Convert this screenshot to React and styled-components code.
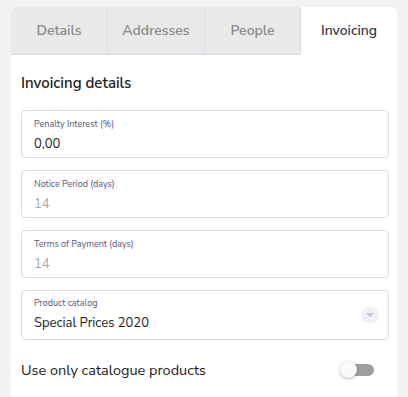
import React from 'react'
import styled, { createGlobalStyle } from 'styled-components';

const GlobalStyle = createGlobalStyle`
  html, body {
    margin: 0;
    padding: 0;
    background: #f2f2f2;
    font-family: "Nunito Sans", Lato, "Open Sans", sans-serif;
  }
`

const tabs = ['Details', 'Addresses', 'People', 'Invoicing']

const fields = [
  { label: 'Penalty Interest (%)', value: '0,00', muted: false },
  { label: 'Notice Period (days)', value: '14', muted: true },
  { label: 'Terms of Payment (days)', value: '14', muted: true },
]

export default function App() {
  return (
    <>
      <GlobalStyle />
      <Page>
        <Card>
          <TabBar>
            {tabs.map((t) => (
              <Tab key={t} $active={t === 'Invoicing'}>{t}</Tab>
            ))}
          </TabBar>
          <Body>
            <Titulo>Invoicing details</Titulo>
            {fields.map((f) => (
              <Field key={f.label}>
                <Label>{f.label}</Label>
                <Value $muted={f.muted}>{f.value}</Value>
              </Field>
            ))}
            <Field $select>
              <div>
                <Label>Product catalog</Label>
                <Value>Special Prices 2020</Value>
              </div>
              <Dropdown>
                <svg width="8" height="5" viewBox="0 0 8 5">
                  <path d="M0 0 L8 0 L4 4.5 Z" fill="#c9c9d4" />
                </svg>
              </Dropdown>
            </Field>
            <ToggleRow>
              <span>Use only catalogue products</span>
              <Switch>
                <Track />
                <Knob />
              </Switch>
            </ToggleRow>
          </Body>
        </Card>
      </Page>
    </>
  )
}

const Page = styled.div`
  padding: 7px 11px 0 11px;
  height: 397px;
  box-sizing: border-box;
`

const Card = styled.div`
  background: #fff;
  border-radius: 6px 6px 0 0;
  overflow: hidden;
  height: 100%;
`

const TabBar = styled.div`
  display: grid;
  grid-template-columns: 96px 97px 96px 1fr;
  height: 48px;
`

const Tab = styled.div`
  display: flex;
  align-items: center;
  justify-content: center;
  font-size: 14px;
  font-weight: ${(p) => (p.$active ? 500 : 600)};
  color: ${(p) => (p.$active ? '#2b2f3e' : '#8a8a8a')};
  background: ${(p) => (p.$active ? '#fff' : '#e9e9e9')};
  border-bottom: 1px solid ${(p) => (p.$active ? 'transparent' : '#d6dde6')};
  & + & {
    border-left: 1px solid #d6dde6;
  }
`

const Body = styled.div`
  padding: 18px 8px 0 10px;
  display: flex;
  flex-direction: column;
`

const Titulo = styled.h2`
  margin: 0 0 17px 0;
  font-size: 15px;
  font-weight: 600;
  color: #222;
  line-height: 20px;
`

const Field = styled.div`
  border: 1px solid #dadde6;
  border-radius: 4px;
  height: ${(p) => (p.$select ? '50px' : '48px')};
  box-sizing: border-box;
  padding: 7px 11px 0 12px;
  margin-bottom: 12px;
  display: ${(p) => (p.$select ? 'flex' : 'block')};
  justify-content: space-between;
  align-items: center;
  ${(p) => p.$select && 'padding-top: 0;'}
`

const Label = styled.div`
  font-size: 9px;
  color: #55577a;
  line-height: 12px;
`

const Value = styled.div`
  font-size: 13px;
  line-height: 20px;
  margin-top: 4px;
  color: ${(p) => (p.$muted ? '#a9a9a9' : '#1c1c1c')};
`

const Dropdown = styled.div`
  width: 18px;
  height: 18px;
  border-radius: 50%;
  background: #f2f1fa;
  display: flex;
  align-items: center;
  justify-content: center;
  margin-right: -2px;
`

const ToggleRow = styled.div`
  display: flex;
  justify-content: space-between;
  align-items: center;
  font-size: 14.5px;
  color: #222;
  padding-top: 8px;
  padding-right: 15px;
`

const Switch = styled.div`
  position: relative;
  width: 34px;
  height: 18px;
`

const Track = styled.div`
  position: absolute;
  left: 6px;
  top: 3px;
  width: 28px;
  height: 12px;
  border-radius: 6px;
  background: #9e9e9e;
`

const Knob = styled.div`
  position: absolute;
  left: 0;
  top: 0;
  width: 17px;
  height: 17px;
  border-radius: 50%;
  background: #fafafa;
  box-shadow: 0 1px 3px rgba(0, 0, 0, 0.3);
`
